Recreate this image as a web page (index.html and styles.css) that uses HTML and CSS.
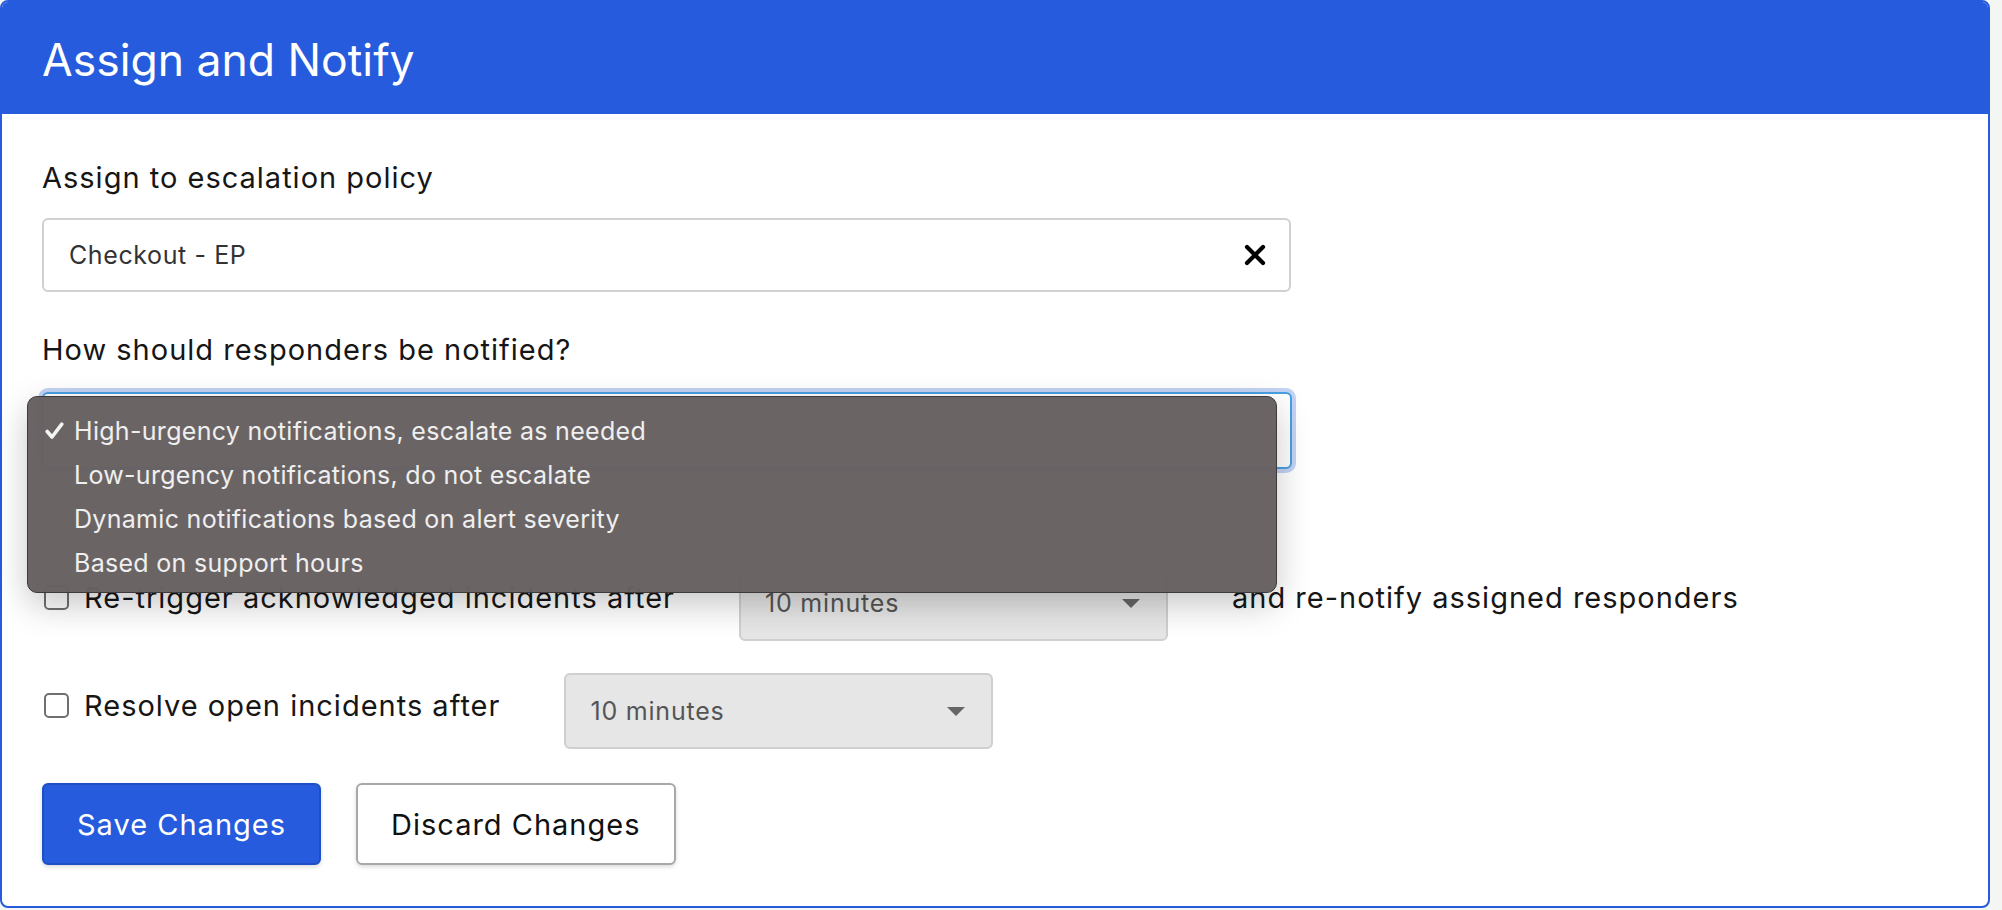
FILE: index.html
```html
<!DOCTYPE html>
<html lang="en">
<head>
  <meta charset="UTF-8">
  <meta name="viewport" content="width=device-width, initial-scale=1.0">
  <title>Assign and Notify</title>
  <link rel="stylesheet" href="styles.css">
</head>
<body>

  <div class="card">
    <div class="card-header">
      <h1>Assign and Notify</h1>
    </div>

    <div class="card-body">
      <div class="field">
        <label class="field-label">Assign to escalation policy</label>
        <div class="combo">
          <span class="combo-value">Checkout - EP</span>
          <svg class="clear-icon" width="24" height="24" viewBox="0 0 24 24">
            <path d="M4 4 L20 20 M20 4 L4 20" stroke="#000" stroke-width="4.2" stroke-linecap="round" fill="none"/>
          </svg>
        </div>
      </div>

      <div class="field notify-field">
        <label class="field-label">How should responders be notified?</label>
        <div class="select focused"></div>

        <!-- native select popup is open over the page -->
        <ul class="dropdown-menu">
          <li class="selected">
            <svg class="check" width="19" height="18" viewBox="0 0 19 18">
              <path d="M2.2 9.5 L7 15 L16.8 2.2" stroke="#f4f4f4" stroke-width="3.6" stroke-linecap="round" stroke-linejoin="round" fill="none"/>
            </svg>
            High-urgency notifications, escalate as needed
          </li>
          <li>Low-urgency notifications, do not escalate</li>
          <li>Dynamic notifications based on alert severity</li>
          <li>Based on support hours</li>
        </ul>
      </div>

      <div class="option-row retrigger-row">
        <span class="checkbox"></span>
        <span class="option-text">Re-trigger acknowledged incidents after</span>
        <div class="select small">
          <span>10 minutes</span>
          <span class="caret"></span>
        </div>
        <span class="option-text">and re-notify assigned responders</span>
      </div>

      <div class="option-row">
        <span class="checkbox"></span>
        <span class="option-text">Resolve open incidents after</span>
        <div class="select small">
          <span>10 minutes</span>
          <span class="caret"></span>
        </div>
      </div>

      <div class="actions">
        <button class="btn btn-primary">Save Changes</button>
        <button class="btn btn-default">Discard Changes</button>
      </div>
    </div>
  </div>

</body>
</html>
```

FILE: styles.css
```css
body {
  margin: 0;
  padding: 0;
  background-color: #f3f6f3;
  font-family: Inter, "Liberation Sans", Arial, sans-serif;
  color: #161616;
}

.card {
  width: 1990px;
  height: 908px;
  box-sizing: border-box;
  border: 2px solid #255bdc;
  border-radius: 8px;
  background-color: #fff;
  overflow: visible;
}

.card-header {
  height: 112px;
  background-color: #255bdc;
  border-radius: 6px 6px 0 0;
  display: flex;
  align-items: center;
  padding: 4px 40px 0;
  box-sizing: border-box;
}

.card-header h1 {
  margin: 0;
  font-size: 44.5px;
  font-weight: 400;
  color: #fff;
}

.card-body {
  padding: 46px 40px 0;
}

.field {
  position: relative;
}

.field-label {
  display: block;
  font-size: 29px;
  letter-spacing: 1px;
  line-height: 36px;
  margin-bottom: 22px;
}

.notify-field {
  margin-top: 40px;
}

.notify-field .field-label {
  margin-bottom: 24px;
}

.combo {
  width: 1249px;
  height: 74px;
  box-sizing: border-box;
  border: 2px solid #d0d0d0;
  border-radius: 6px;
  display: flex;
  align-items: center;
  justify-content: space-between;
  padding: 0 22px 0 25px;
}

.combo-value {
  font-size: 25px;
  letter-spacing: 0.6px;
  color: #333;
}

.select {
  box-sizing: border-box;
  border: 2px solid #cfcfcf;
  border-radius: 6px;
  background-color: #e6e6e6;
}

.select.focused {
  width: 1250px;
  height: 77px;
  background-color: #fff;
  border-color: #4a9fe3;
  box-shadow: 0 0 0 4px #c4d2f3;
}

.dropdown-menu {
  position: absolute;
  left: -15px;
  top: 64px;
  width: 1250px;
  height: 197px;
  box-sizing: border-box;
  margin: 0;
  padding: 12px 0 0 46px;
  list-style: none;
  background-color: rgba(104, 97, 98, 0.98);
  border: 1px solid #3e3a3b;
  border-radius: 10px;
  box-shadow: 0 12px 34px rgba(0, 0, 0, 0.22);
  font-size: 25px;
  letter-spacing: 0.3px;
  line-height: 44px;
  color: #efefef;
  z-index: 10;
}

.dropdown-menu li {
  position: relative;
}

.dropdown-menu .check {
  position: absolute;
  left: -29px;
  top: 13px;
}

.option-row {
  display: flex;
  align-items: center;
  margin-top: 20px;
}

.retrigger-row {
  margin-top: 84px;
}

.checkbox {
  width: 21px;
  height: 21px;
  border: 2px solid #707070;
  border-radius: 5px;
  margin-left: 2px;
  margin-right: 15px;
  flex-shrink: 0;
  background-color: #fff;
}

.option-text {
  font-size: 29px;
  letter-spacing: 1px;
}

.select.small {
  width: 429px;
  height: 76px;
  margin: 12px 64px 0;
  display: flex;
  align-items: center;
  justify-content: space-between;
  padding: 0 26px 0 24px;
  font-size: 25px;
  letter-spacing: 0.8px;
  color: #555;
}

.caret {
  width: 0;
  height: 0;
  border-left: 9px solid transparent;
  border-right: 9px solid transparent;
  border-top: 9px solid #666;
}

.actions {
  display: flex;
  gap: 35px;
  margin-top: 34px;
}

.btn {
  height: 82px;
  padding: 0 33px;
  border-radius: 6px;
  font-family: inherit;
  font-size: 29px;
  letter-spacing: 1px;
  cursor: pointer;
  box-shadow: 0 2px 4px rgba(0, 0, 0, 0.14);
}

.btn-primary {
  background-color: #255bdc;
  border: 2px solid #1f4fc4;
  color: #fff;
}

.btn-default {
  background-color: #fff;
  border: 2px solid #a8a8a8;
  color: #111;
}
```
